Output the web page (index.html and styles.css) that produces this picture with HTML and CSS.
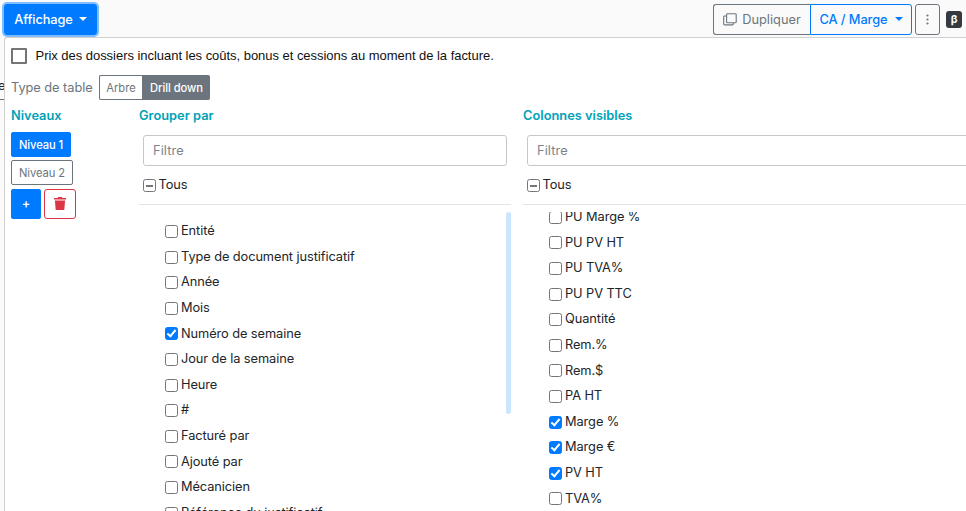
FILE: index.html
```html
<!DOCTYPE html>
<html lang="fr">
<head>
<meta charset="utf-8">
<title>Affichage</title>
<link rel="stylesheet" href="styles.css">
</head>
<body>
<header class="toolbar">
  <button class="btn btn-main">Affichage<i class="caret"></i></button>
  <div class="group">
    <button class="btn btn-copy"><svg width="14" height="13" viewBox="0 0 14 13" fill="none" stroke="currentColor" stroke-width="1.1"><rect x="3.6" y=".8" width="9.6" height="8.9" rx=".8"/><path d="M3.5 3H1.4q-.7 0-.7.7v7.4q0 .8.8.8h8q.8 0 .8-.8V10"/></svg>Dupliquer</button>
    <button class="btn btn-view">CA / Marge<i class="caret"></i></button>
  </div>
  <button class="btn btn-more"><svg width="3" height="11" viewBox="0 0 3 11" fill="currentColor"><circle cx="1.5" cy="1.5" r="1.1"/><circle cx="1.5" cy="5.5" r="1.1"/><circle cx="1.5" cy="9.5" r="1.1"/></svg></button>
  <span class="beta">β</span>
</header>
<div class="body">
  <aside class="behind"><span>e</span></aside>
  <main class="panel">
    <label class="price"><i class="box"></i>Prix des dossiers incluant les coûts, bonus et cessions au moment de la facture.</label>
    <div class="type"><span>Type de table</span><div class="switch"><button>Arbre</button><button class="on">Drill down</button></div></div>
    <div class="columns">
      <section class="levels">
        <h2>Niveaux</h2>
        <button class="level on">Niveau 1</button>
        <button class="level">Niveau 2</button>
        <div class="actions">
          <button class="add">+</button>
          <button class="trash"><svg width="12" height="13" viewBox="0 0 12 13" fill="currentColor"><path d="M0 .9h3.5L4.2 0h3.6l.7.9H12v1.7H0zM.9 3.5h10.2L10.3 13H1.7z"/></svg></button>
        </div>
      </section>
      <section class="column">
        <h2>Grouper par</h2>
        <input class="filter" placeholder="Filtre">
        <label class="all"><i class="check mixed"></i>Tous</label>
        <div class="list">
          <div class="items">
            <label><i class="check"></i>Entité</label>
            <label><i class="check"></i>Type de document justificatif</label>
            <label><i class="check"></i>Année</label>
            <label><i class="check"></i>Mois</label>
            <label><i class="check checked"></i>Numéro de semaine</label>
            <label><i class="check"></i>Jour de la semaine</label>
            <label><i class="check"></i>Heure</label>
            <label><i class="check"></i>#</label>
            <label><i class="check"></i>Facturé par</label>
            <label><i class="check"></i>Ajouté par</label>
            <label><i class="check"></i>Mécanicien</label>
            <label><i class="check"></i>Référence du justificatif</label>
          </div>
          <div class="thumb"></div>
        </div>
      </section>
      <section class="column wide">
        <h2>Colonnes visibles</h2>
        <input class="filter" placeholder="Filtre">
        <label class="all"><i class="check mixed"></i>Tous</label>
        <div class="list">
          <div class="items scrolled">
            <label><i class="check"></i>PU Marge %</label>
            <label><i class="check"></i>PU PV HT</label>
            <label><i class="check"></i>PU TVA%</label>
            <label><i class="check"></i>PU PV TTC</label>
            <label><i class="check"></i>Quantité</label>
            <label><i class="check"></i>Rem.%</label>
            <label><i class="check"></i>Rem.$</label>
            <label><i class="check"></i>PA HT</label>
            <label><i class="check checked"></i>Marge %</label>
            <label><i class="check checked"></i>Marge €</label>
            <label><i class="check checked"></i>PV HT</label>
            <label><i class="check"></i>TVA%</label>
          </div>
        </div>
      </section>
    </div>
  </main>
</div>
</body>
</html>
```
FILE: styles.css
```css
*, *::before { box-sizing: border-box; }
body {
  margin: 0;
  height: 511px;
  overflow: hidden;
  background: #fafafa;
  color: #212529;
  font: 12.8px/20px Inter, sans-serif;
  letter-spacing: -0.08px;
}
button, input { font: inherit; letter-spacing: inherit; margin: 0; }
button { white-space: nowrap; cursor: pointer; }
.toolbar { display: flex; height: 37px; padding: 4px 4px 0 4px; }
.btn {
  display: flex;
  align-items: center;
  justify-content: center;
  height: 31px;
  padding: 0;
  border: 1px solid #6c757d;
  border-radius: 3px;
  background: transparent;
  color: #6c757d;
}
.btn-main {
  width: 93px;
  background: #007bff;
  border-color: #007bff;
  color: #fff;
  font-weight: 500;
  box-shadow: 0 0 0 2px #80bdff;
}
.caret {
  margin-left: 7px;
  margin-bottom: 2px;
  border: 4px solid transparent;
  border-top-color: currentColor;
  border-bottom: 0;
}
.btn-main .caret { margin-left: 6px; }
.group { display: flex; margin-left: auto; }
.btn-copy { width: 97px; gap: 5px; border-right: 0; border-radius: 3px 0 0 3px; letter-spacing: 0.02px; }
.btn-view { width: 102px; border-color: #007bff; color: #007bff; border-radius: 0 3px 3px 0; font-weight: 500; }
.btn-more { width: 25px; margin: 0 6px 0 3px; }
.beta {
  width: 16px;
  height: 17px;
  margin-top: 7px;
  border-radius: 3px;
  background: #343a40;
  color: #fff;
  font: bold 11px/17px Inter, sans-serif;
  text-align: center;
}
.body { display: flex; height: 474px; }
.behind { width: 5px; margin-right: -1px; flex: none; overflow: hidden; height: 63px; padding-top: 39px; border-bottom: 1px solid #6c757d; }
.behind span { display: block; margin-left: -2px; }
.panel { flex: 1; min-width: 0; overflow: hidden; background: #fff; border: 1px solid #d0d0d0; border-width: 1px 0 0 1px; border-top-left-radius: 3px; padding-left: 6px; }
.price { display: flex; align-items: center; height: 36px; gap: 8.5px; padding-bottom: 1px; color: #111; font: 13px "Liberation Sans", sans-serif; letter-spacing: -0.035px; }
.box { width: 16px; height: 16px; border: 2px solid #757575; border-radius: 1px; position: relative; top: 0.5px; }
.type { display: flex; align-items: center; height: 27px; color: #6c757d; letter-spacing: -0.05px; }
.type > span { width: 88px; }
.switch { display: flex; }
.switch button { width: 43px; height: 25px; padding: 0; border: 1px solid #6c757d; border-right: 0; border-radius: 2px 0 0 2px; background: #fff; color: #6c757d; font-size: 11.2px; }
.switch .on { width: 68px; border-radius: 0 2px 2px 0; background: #6c757d; color: #fff; font-weight: 500; }
.columns { display: flex; }
h2 { margin: 0; padding-top: 5px; height: 31px; font: 600 12.8px/20px Inter, sans-serif; letter-spacing: 0.02px; color: #00a2b8; }
.levels { width: 128px; flex: none; }
.level { display: block; height: 25px; width: 62px; margin-bottom: 3px; padding: 0; border: 1px solid #6c757d; border-radius: 2px; background: #fff; color: #6c757d; font-size: 11.2px; line-height: 20px; }
.level.on { width: 60px; border-color: #007bff; background: #007bff; color: #fff; font-weight: 500; }
.actions { display: flex; gap: 3px; padding-top: 1px; }
.add { width: 30px; height: 30px; padding: 0; border: 0; border-radius: 2px; background: #007bff; color: #fff; font-weight: 500; }
.trash { display: grid; place-items: center; width: 32px; height: 30px; padding: 0 0 2px; border: 1px solid #dc3545; border-radius: 3px; background: #fff; color: #dc3545; }
.column { width: 372px; flex: none; margin-right: 12px; }
.column.wide { width: 500px; margin-right: 0; }
.filter { display: block; width: 364px; height: 31px; margin: 3px 4px 0; padding: 0 9px 1px; border: 1px solid #c3c8cd; border-radius: 3px; background: #fff; letter-spacing: 0.1px; }
.wide .filter { width: 492px; }
.filter::placeholder { color: #7c848b; opacity: 1; }
.all { display: flex; gap: 2.5px; height: 39px; padding: 9px 4px 0; border-bottom: 1px solid #e5e5e5; }
.all .check { margin-top: 4px; }
.list { display: flex; justify-content: space-between; height: 299px; margin-top: 7px; overflow: hidden; }
.items { padding: 6.2px 0 0 26px; }
.items.scrolled { padding: 0 0 0 26px; margin-top: -8px; }
.items label { display: flex; gap: 3px; height: 25.6px; padding-top: 3px; }
.check { display: block; flex: none; width: 13px; height: 13px; margin-top: 3.9px; border: 1px solid #767676; border-radius: 2.5px; background: #fff; }
.mixed { padding: 4.5px 2px; }
.mixed::before { content: ""; display: block; width: 7px; height: 2px; background: #767676; }
.checked { border-color: #007bff; background: #007bff; }
.checked::before { content: ""; display: block; width: 5px; height: 9px; margin: 0 0 0 3px; border: solid #fff; border-width: 0 2px 2px 0; transform: rotate(40deg); }
.thumb { width: 5px; height: 202px; border-radius: 3px; background: #cce5ff; }
```
